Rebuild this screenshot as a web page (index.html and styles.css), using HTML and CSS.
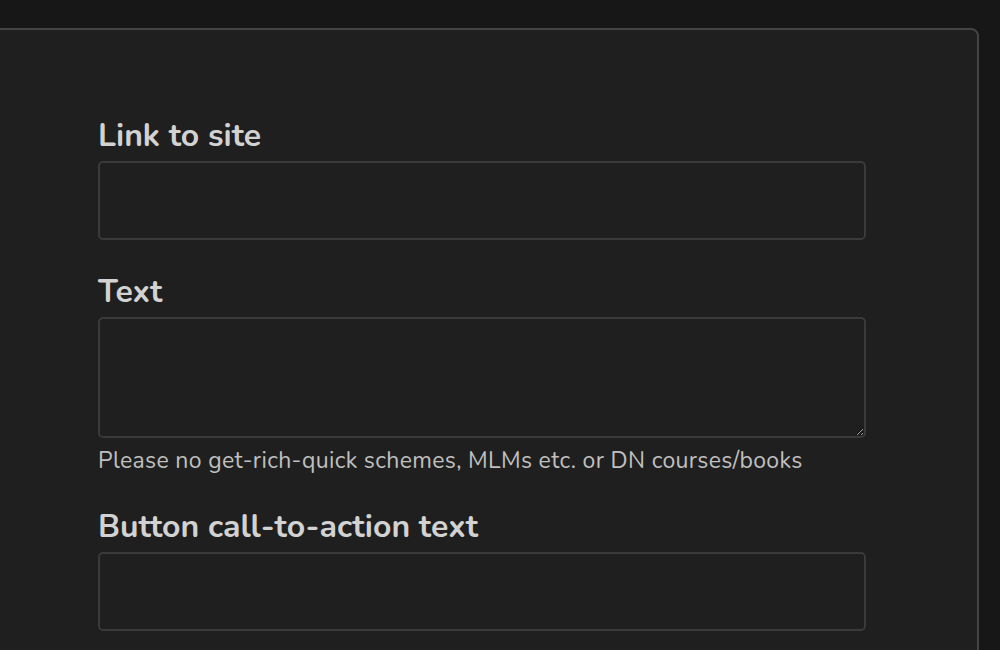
FILE: index.html
```html
<!DOCTYPE html>
<html lang="en">
<head>
<meta charset="utf-8">
<title>Form</title>
<link rel="stylesheet" href="styles.css">
</head>
<body>
<div class="card">
  <form class="form">
    <div class="field">
      <label class="label" for="link">Link to site</label>
      <input class="input" id="link" type="text">
    </div>
    <div class="field">
      <label class="label" for="text">Text</label>
      <textarea class="input textarea" id="text"></textarea>
      <p class="hint">Please no get-rich-quick schemes, MLMs etc. or DN courses/books</p>
    </div>
    <div class="field">
      <label class="label" for="cta">Button call-to-action text</label>
      <input class="input" id="cta" type="text">
    </div>
  </form>
</div>
</body>
</html>
```
FILE: styles.css
```css
html, body {
  margin: 0;
  padding: 0;
  background: #171717;
  height: 100%;
  overflow: hidden;
  color-scheme: dark;
}
body {
  font-family: "Nunito", "Lato", "Open Sans", sans-serif;
}
.card {
  margin-top: 28px;
  margin-left: -30px;
  width: 1009px;
  height: 700px;
  box-sizing: border-box;
  background: #1f1f1f;
  border: 2px solid #444444;
  border-radius: 8px;
  padding: 87px 111px 0 126px;
}
.form {
  display: flex;
  flex-direction: column;
  gap: 33px;
}
.field {
  display: flex;
  flex-direction: column;
}
.label {
  display: block;
  font-size: 32px;
  line-height: 38px;
  font-weight: 700;
  color: #d2d2d2;
  margin-bottom: 6px;
}
.input {
  display: block;
  width: 768px;
  height: 79px;
  box-sizing: border-box;
  background: #1f1f1f;
  border: 2px solid #3a3a3a;
  border-radius: 5px;
  margin: 0;
  padding: 8px 12px;
  color: #ddd;
  font: inherit;
  outline: none;
}
.textarea {
  height: 121px;
  resize: vertical;
}
.hint {
  margin: 9px 0 0;
  font-size: 23px;
  line-height: 28px;
  letter-spacing: 0.35px;
  color: #c0c0c0;
}
```
